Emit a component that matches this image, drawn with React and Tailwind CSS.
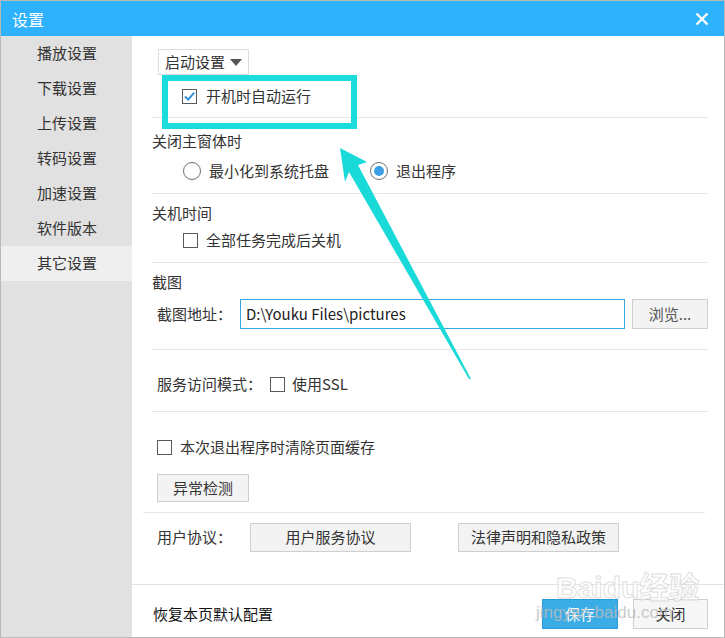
import React from "react";

const Check = ({ checked }) => (
  <span className="relative w-[15px] h-[15px] border border-[#5a5a5a] bg-white shrink-0 flex items-center justify-center">
    {checked && (
      <svg width="13" height="13" viewBox="0 0 13 13">
        <path d="M2 6.5 L5.2 9.6 L11.2 2.6" stroke="#2f8fdc" strokeWidth="2" fill="none" />
      </svg>
    )}
  </span>
);

const Radio = ({ on }) => (
  <span className="w-[18px] h-[18px] rounded-full border border-[#707070] bg-white shrink-0 flex items-center justify-center">
    {on && <span className="w-[10px] h-[10px] rounded-full bg-[#3a9fe8]" />}
  </span>
);

const Sep = () => <div className="h-px bg-[#e6e6e6]" />;

const GrayBtn = ({ className, children }) => (
  <div className={"flex items-center justify-center border border-[#cfcfcf] bg-[#f3f3f3] text-[#333] " + className}>
    {children}
  </div>
);

export default function App() {
  const items = ["播放设置", "下载设置", "上传设置", "转码设置", "加速设置", "软件版本", "其它设置"];
  return (
    <div className="relative w-[725px] h-[638px] border border-[#b8b8b8] flex flex-col bg-white font-['Noto_Sans_CJK_SC',sans-serif] text-[15px] text-[#333] overflow-hidden">
      <div className="h-[35px] shrink-0 bg-[#2fb2fe] flex items-center justify-between pl-[11px] pr-[15px] text-white text-[16px]">
        <span>设置</span>
        <svg width="14" height="14" viewBox="0 0 14 14">
          <path d="M1.5 1.5 L12.5 12.5 M12.5 1.5 L1.5 12.5" stroke="white" strokeWidth="2.4" />
        </svg>
      </div>
      <div className="flex flex-1">
        <div className="w-[131px] shrink-0 bg-[#e1e1e1] flex flex-col">
          {items.map((t, i) => (
            <div key={t} className={"h-[35px] flex items-center pl-[36px] text-[#333] " + (i === 6 ? "bg-[#efefef]" : "")}>
              {t}
            </div>
          ))}
        </div>
        <div className="flex-1 flex flex-col">
          <div className="flex flex-col pl-[20px] pr-[21px] flex-1">
            <div className="mt-[13px] h-[26px] flex">
              <div className="ml-[6px] w-[91px] h-[26px] border border-[#dcdcdc] flex items-center pl-[6px] gap-[5px]">
                <span>启动设置</span>
                <svg width="12" height="7" viewBox="0 0 12 7"><path d="M0 0 L12 0 L6 7 Z" fill="#555" /></svg>
              </div>
            </div>
            <div className="h-[42px] flex items-center pl-[30px] gap-[9px]">
              <Check checked />
              <span>开机时自动运行</span>
            </div>
            <Sep />
            <div className="flex flex-col pt-[11px] pb-[10px]">
              <div className="h-[24px] flex items-center">关闭主窗体时</div>
              <div className="mt-[6px] h-[24px] flex items-center pl-[31px]">
                <Radio />
                <span className="ml-[8px]">最小化到系统托盘</span>
                <span className="ml-[41px]"><Radio on /></span>
                <span className="ml-[8px]">退出程序</span>
              </div>
            </div>
            <Sep />
            <div className="flex flex-col pt-[7px] pb-[10px]">
              <div className="h-[24px] flex items-center">关机时间</div>
              <div className="mt-[3px] h-[24px] flex items-center pl-[31px] gap-[8px]">
                <Check />
                <span>全部任务完成后关机</span>
              </div>
            </div>
            <Sep />
            <div className="flex flex-col pt-[7px] pb-[20px]">
              <div className="h-[24px] flex items-center">截图</div>
              <div className="mt-[5px] h-[30px] flex items-center pl-[5px]">
                <span className="w-[83px] shrink-0">截图地址：</span>
                <div className="w-[385px] h-[30px] shrink-0 border border-[#3aa6df] flex items-center pl-[5px] text-[#222]">
                  D:\Youku Files\pictures
                </div>
                <GrayBtn className="ml-[7px] w-[76px] h-[30px] shrink-0 text-[#555]">浏览...</GrayBtn>
              </div>
            </div>
            <Sep />
            <div className="flex flex-col pt-[22px] pb-[15px]">
              <div className="h-[24px] flex items-center pl-[5px]">
                <span className="w-[113px] shrink-0">服务访问模式：</span>
                <Check />
                <span className="ml-[7px]">使用SSL</span>
              </div>
            </div>
            <Sep />
            <div className="flex flex-col pt-[23px] pb-[10px]">
              <div className="h-[24px] flex items-center pl-[5px] gap-[8px]">
                <Check />
                <span>本次退出程序时清除页面缓存</span>
              </div>
              <GrayBtn className="mt-[15px] ml-[5px] w-[92px] h-[28px]">异常检测</GrayBtn>
            </div>
            <div className="h-px bg-[#e6e6e6] ml-[-9px] mr-[3px]" />
            <div className="pt-[10px] flex items-start pl-[5px]">
              <div className="h-[29px] flex items-center w-[93px] shrink-0">用户协议：</div>
              <GrayBtn className="w-[161px] h-[29px] shrink-0">用户服务协议</GrayBtn>
              <GrayBtn className="ml-[47px] w-[161px] h-[29px] shrink-0">法律声明和隐私政策</GrayBtn>
            </div>
          </div>
          <div className="h-px bg-[#e3e3e3]" />
          <div className="h-[52px] shrink-0 flex items-start pt-[14px] pl-[21px] pr-[21px]">
            <div className="h-[30px] flex items-center text-[#111]">恢复本页默认配置</div>
            <div className="ml-auto w-[76px] h-[30px] flex items-center justify-center bg-[#3aace6] border border-[#2c9bd8] text-white">保存</div>
            <GrayBtn className="ml-[15px] w-[75px] h-[30px] bg-[#f6f6f6]">关闭</GrayBtn>
          </div>
        </div>
      </div>

      {/* annotation overlay */}
      <div className="absolute left-[161px] top-[74px] w-[195px] h-[54px] border-[6px] border-[#1adcdc] pointer-events-none" />
      <svg className="absolute left-0 top-0 pointer-events-none" width="725" height="638" viewBox="0 0 725 638">
        <polygon points="339,147 366,161 357,164 470,378 468,378 348,171 344,181" fill="#1ad9d9" />
      </svg>
      {/* watermark */}
      <div className="absolute left-[555px] top-[572px] text-[30px] leading-none font-bold text-white [-webkit-text-stroke:1px_#d8d8d8] opacity-80 pointer-events-none font-['Liberation_Sans','Noto_Sans_CJK_SC',sans-serif]">
        Baidu经验
      </div>
      <div className="absolute left-[535px] top-[603px] text-[17px] leading-none text-[#bdbdbd] opacity-80 pointer-events-none font-['Liberation_Sans',sans-serif]">
        jingyan.baidu.com
      </div>
    </div>
  );
}
